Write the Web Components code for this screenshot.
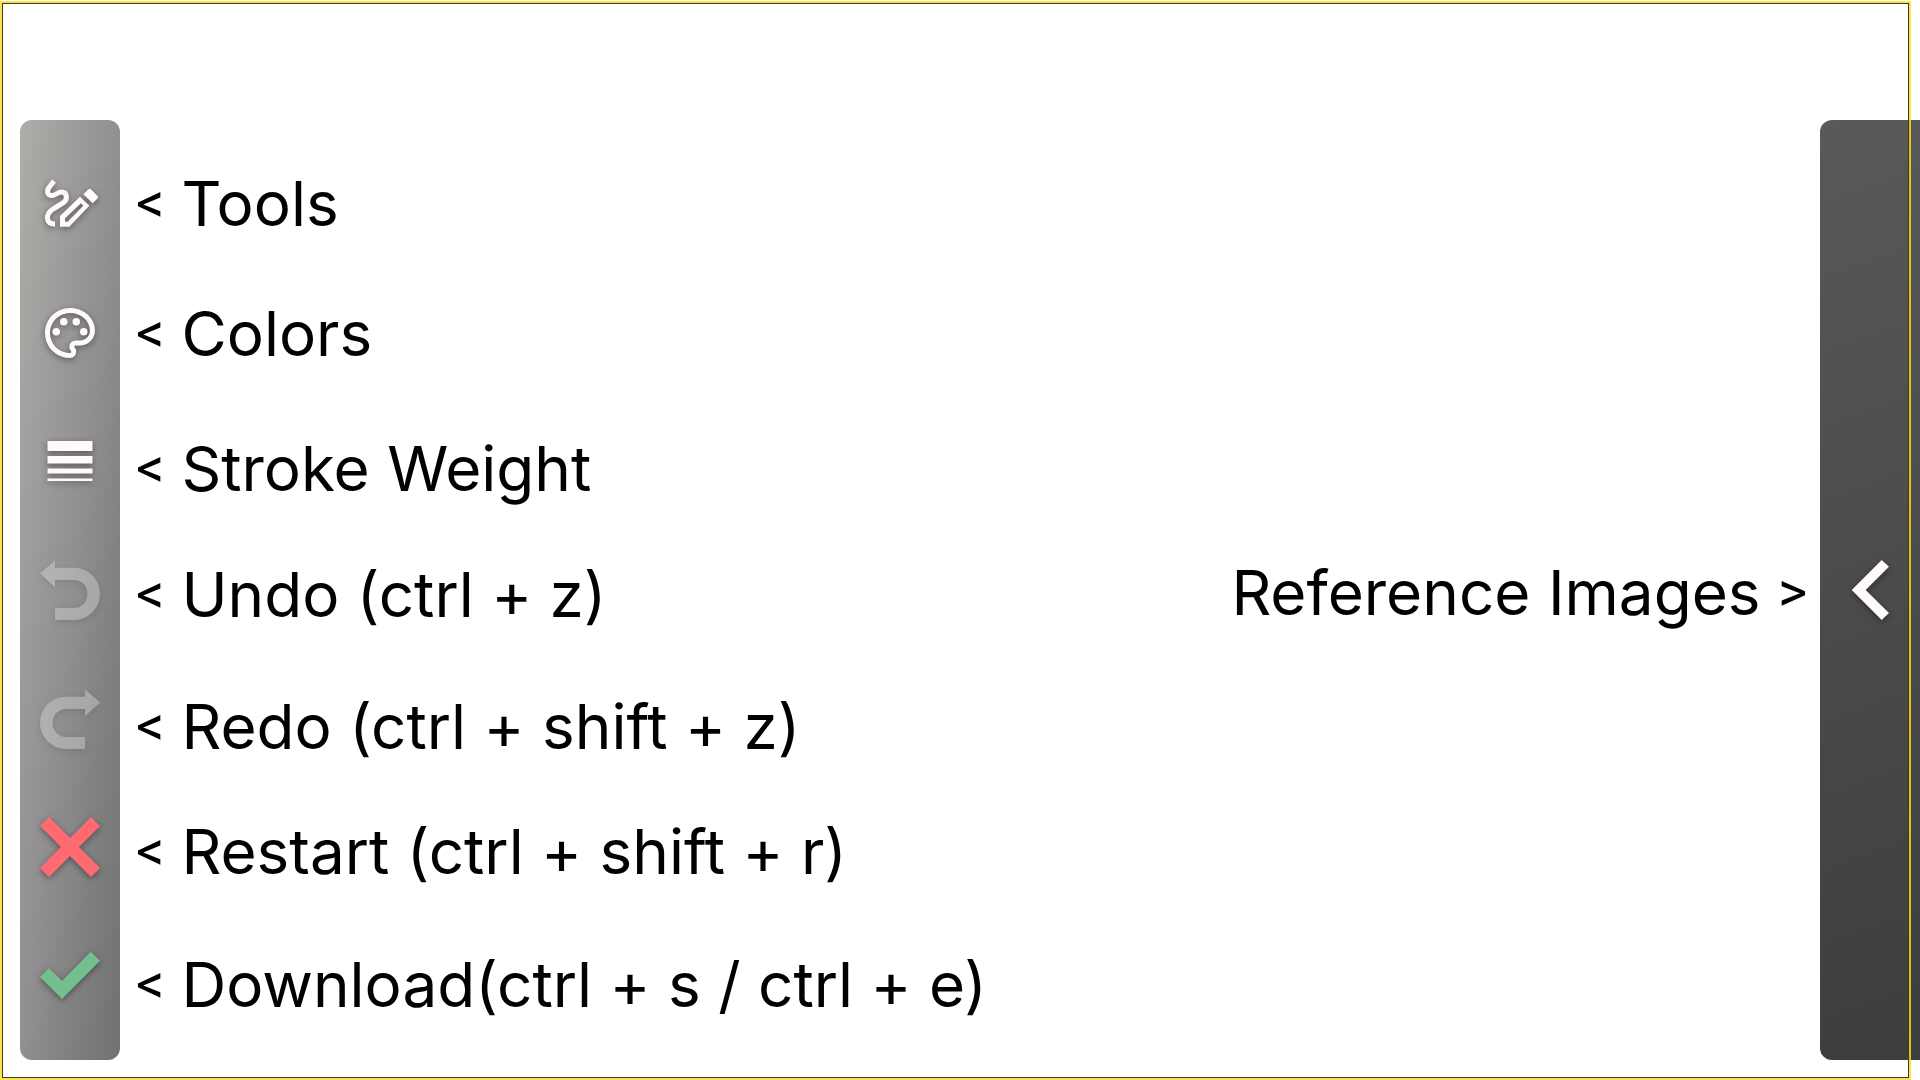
<!DOCTYPE html>
<html lang="en">
<head>
<meta charset="utf-8">
<title>Sketch board guide</title>
<style>
  body { margin: 0; background: #fff; color: #000; font-family: Inter, "Open Sans", sans-serif; }
</style>
</head>
<body>
<sketch-board></sketch-board>
<script>
const icons = {
  draw: `<path d="M14 7 9 13.500C6 18 8 21.500 12 21.500C16 21.500 17.500 18 21.500 18C27.500 18 28 25.500 23 29L13 35C5 40.500 5.500 50 15 50.200" fill="none" stroke="currentColor" stroke-width="5"/><path fill-rule="evenodd" d="M20 52.700V42L40 22.700l9.300 9L29.300 52.700ZM25 47.700h2.700L43.300 31.700 41 29.300 25 44.300Z"/><path d="M43.300 20.300l5-5q1.400-1.200 2.700 0l6.500 6.700q1 1.200 0 2.400l-4.800 4.900Z"/>`,
  palette: `<g transform="scale(2.5)"><path d="M12 22C6.490 22 2 17.510 2 12S6.490 2 12 2s10 4.040 10 9c0 3.310-2.690 6-6 6h-1.770c-.28 0-.5.22-.5.5 0 .12.05.23.13.33.41.47.64 1.060.64 1.670A2.500 2.500 0 0 1 12 22zm0-18c-4.410 0-8 3.590-8 8s3.590 8 8 8c.28 0 .5-.22.5-.5a.54.54 0 0 0-.14-.35c-.41-.46-.63-1.050-.63-1.650a2.500 2.500 0 0 1 2.500-2.500H16c2.210 0 4-1.790 4-4 0-3.860-3.590-7-8-7z"/><circle cx="6.5" cy="11.5" r="1.5"/><circle cx="9.5" cy="7.5" r="1.5"/><circle cx="14.5" cy="7.5" r="1.5"/><circle cx="17.5" cy="11.5" r="1.5"/></g>`,
  weight: `<path d="M7.500 10h45v10h-45ZM7.500 25h45v7.500h-45ZM7.500 37.500h45v5h-45ZM7.500 47.500h45v2.500h-45Z"/>`,
  undo: `<path d="M0 13.500 15 .5V7.700H34A26 26.150 0 0 1 34 60H15V48H34A13.500 14 0 0 0 34 20H15V27.300Z"/>`,
  redo: `<path d="M60 13.500 45 .5V7.700H26A26 26.150 0 0 0 26 60H45V48H26A13.500 14 0 0 1 26 20H45V27.300Z"/>`,
  cross: `<path d="M9 0 30 21 51 0 60 9 39 30 60 51 51 60 30 39 9 60 0 51 21 30 0 9Z"/>`,
  check: `<path d="M0 31 9 22 22 35 50.700 5.700 60 14.700 22 53Z"/>`,
  back: `<path d="M11.700 30 41.700 0 49 6.700 25.700 30 49 53 41.700 60Z"/>`
};

customElements.define('icon-button', class extends HTMLElement {
  connectedCallback() {
    const root = this.attachShadow({ mode: 'open' });
    root.innerHTML = `
      <style>
        :host { display: flex; align-items: center; justify-content: center; color: #fffafa; }
        :host([tone="danger"]) { color: #ff6b70; }
        :host([tone="success"]) { color: #74bf90; }
        button { display: block; padding: 0; border: 0; background: none; color: inherit; cursor: pointer; }
        button:disabled { opacity: .28; cursor: default; }
        svg { display: block; width: 60px; height: 60px; overflow: visible; fill: currentColor;
              filter: drop-shadow(0 2px 3px rgba(0, 0, 0, .4)); }
      </style>
      <button type="button"><svg viewBox="0 0 60 60" aria-hidden="true">${icons[this.getAttribute('icon')]}</svg></button>`;
    const button = root.querySelector('button');
    button.setAttribute('aria-label', this.getAttribute('label'));
    button.disabled = this.hasAttribute('disabled');
  }
});

customElements.define('tool-bar', class extends HTMLElement {
  connectedCallback() {
    this.attachShadow({ mode: 'open' }).innerHTML = `
      <style>
        :host { display: flex; flex-direction: column; flex: none; width: 100px; padding: 20px 0;
                box-sizing: border-box; border-radius: 12px;
                background: linear-gradient(to bottom right, #adada9, #918f90 50%, #717171); }
        ::slotted(*) { flex: 1; }
      </style><slot></slot>`;
  }
});

customElements.define('side-panel', class extends HTMLElement {
  connectedCallback() {
    this.attachShadow({ mode: 'open' }).innerHTML = `
      <style>
        :host { display: flex; align-items: center; justify-content: center; flex: none; width: 100px;
                border-radius: 12px 0 0 12px;
                background: linear-gradient(160deg, #595957, #3d3d3d); }
      </style><slot></slot>`;
  }
});

customElements.define('hint-label', class extends HTMLElement {
  connectedCallback() {
    const after = this.hasAttribute('after');
    const mark = `<span class="mark">${after ? '&gt;' : '&lt;'}</span>`;
    this.attachShadow({ mode: 'open' }).innerHTML = `
      <style>
        :host { display: block; font-size: 62px; line-height: 80px; white-space: nowrap; }
        .mark { display: inline-block; width: 28px; font-family: Roboto, sans-serif; font-size: 56px;
                line-height: 56px; vertical-align: 4px; }
      </style>${after ? '<slot></slot> ' + mark : mark + ' <slot></slot>'}`;
  }
});

customElements.define('sketch-board', class extends HTMLElement {
  connectedCallback() {
    this.attachShadow({ mode: 'open' }).innerHTML = `
      <style>
        :host { display: flex; box-sizing: border-box; min-height: 100vh; padding: 120px 0 20px 20px; }
        main { display: flex; flex: 1; justify-content: space-between; }
        .hints { display: grid; grid-template-rows: 130px 135px 126px 132px 125px 133px 80px;
                 align-content: start; padding: 44px 0 0 16px; }
        .aside { align-self: center; padding: 6px 14px 0 0; }
        .focus-ring { position: absolute; inset: 1px 9px 0 0; box-sizing: border-box; pointer-events: none;
                      border: 2px solid rgba(250, 220, 40, .82); }
        .focus-ring::after { content: ""; display: block; height: 100%; box-sizing: border-box;
                             border: 1px solid #3f3a17; }
      </style>
      <tool-bar role="toolbar" aria-label="Drawing tools">
        <icon-button icon="draw" label="Tools"></icon-button>
        <icon-button icon="palette" label="Colors"></icon-button>
        <icon-button icon="weight" label="Stroke Weight"></icon-button>
        <icon-button icon="undo" label="Undo" disabled></icon-button>
        <icon-button icon="redo" label="Redo" disabled></icon-button>
        <icon-button icon="cross" label="Restart" tone="danger"></icon-button>
        <icon-button icon="check" label="Download" tone="success"></icon-button>
      </tool-bar>
      <main>
        <div class="hints">
          <hint-label>Tools</hint-label>
          <hint-label>Colors</hint-label>
          <hint-label>Stroke Weight</hint-label>
          <hint-label>Undo (ctrl + z)</hint-label>
          <hint-label>Redo (ctrl + shift + z)</hint-label>
          <hint-label>Restart (ctrl + shift + r)</hint-label>
          <hint-label>Download(ctrl + s / ctrl + e)</hint-label>
        </div>
        <hint-label class="aside" after>Reference Images</hint-label>
      </main>
      <side-panel><icon-button icon="back" label="Open reference images"></icon-button></side-panel>
      <div class="focus-ring"></div>`;
  }
});
</script>
</body>
</html>
